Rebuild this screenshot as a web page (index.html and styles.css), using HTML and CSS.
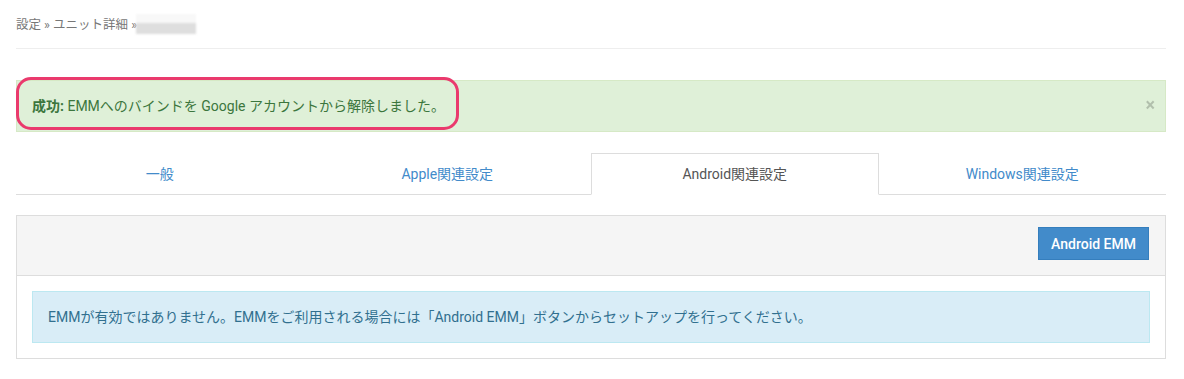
FILE: index.html
```html
<!DOCTYPE html>
<html lang="ja">
<head>
    <meta charset="UTF-8">
    <meta name="viewport" content="width=device-width, initial-scale=1.0">
    <title>ユニット詳細</title>
    <link rel="stylesheet" href="styles.css">
</head>
<body>
    <div id="page">
        <div id="breadcrumb">
            <span>設定</span> » <span>ユニット詳細</span> » <span class="masked"></span>
        </div>

        <div class="alert alert-success">
            <b>成功:</b> EMMへのバインドを Google アカウントから解除しました。
            <span class="close">×</span>
            <div class="highlight"></div>
        </div>

        <ul id="tabs">
            <li><a href="#">一般</a></li>
            <li><a href="#">Apple関連設定</a></li>
            <li class="active"><a href="#">Android関連設定</a></li>
            <li><a href="#">Windows関連設定</a></li>
        </ul>

        <div class="panel">
            <div class="panel-heading">
                <button class="btn">Android EMM</button>
            </div>
            <div class="panel-body">
                <div class="alert alert-info">
                    EMMが有効ではありません。EMMをご利用される場合には「Android EMM」ボタンからセットアップを行ってください。
                </div>
            </div>
        </div>
    </div>
</body>
</html>
```

FILE: styles.css
```css
body{
    margin: 0;
    font-family: Roboto, "Noto Sans CJK JP", sans-serif;
    font-size: 14px;
    color: #555;
}
#page{
    margin: 0 18px 0 16px;
}
#breadcrumb{
    height: 48px;
    line-height: 50px;
    font-size: 12.5px;
    color: #777;
    border-bottom: 1px solid #eee;
    margin-bottom: 31px;
}
.masked{
    display: inline-block;
    width: 60px;
    height: 20px;
    vertical-align: -5px;
    margin-left: -4px;
    background: linear-gradient(#f8f8f8 0 45%, #dedede 45% 100%);
    filter: blur(1px);
}
.alert{
    position: relative;
    padding: 15px;
    line-height: 20px;
    border: 1px solid transparent;
}
.alert-success{
    background-color: #dff0d8;
    border-color: #d6e9c6;
    color: #3c763d;
    margin-bottom: 21px;
}
.close{
    position: absolute;
    right: 10px;
    top: 14px;
    font-size: 18px;
    font-weight: bold;
    color: #000;
    opacity: 0.2;
}
.highlight{
    position: absolute;
    left: -1px;
    top: -4px;
    width: 437px;
    height: 47px;
    border: 3px solid #ea3a6d;
    border-radius: 15px;
}
#tabs{
    display: flex;
    list-style: none;
    margin: 0 0 20px 0;
    padding: 0;
    border-bottom: 1px solid #ddd;
}
#tabs li{
    flex: 1;
    text-align: center;
    margin-bottom: -1px;
}
#tabs a{
    display: block;
    line-height: 20px;
    padding: 10px 15px;
    color: #428bca;
    text-decoration: none;
    border: 1px solid transparent;
    border-bottom-color: #ddd;
}
#tabs li.active a{
    color: #555;
    border-color: #ddd;
    border-bottom-color: #fff;
    background: #fff;
}
.panel{
    border: 1px solid #ddd;
}
.panel-heading{
    background: #f5f5f5;
    border-bottom: 1px solid #ddd;
    padding: 11px 16px 15px;
    text-align: right;
    height: 33px;
}
.btn{
    font-family: inherit;
    font-size: 14px;
    font-weight: 500;
    color: #fff;
    background: #428bca;
    border: 1px solid #357ebd;
    height: 33px;
    padding: 0 12px;
    cursor: pointer;
}
.panel-body{
    padding: 15px;
}
.alert-info{
    background: #d9edf7;
    border-color: #bce8f1;
    color: #31708f;
}
```
